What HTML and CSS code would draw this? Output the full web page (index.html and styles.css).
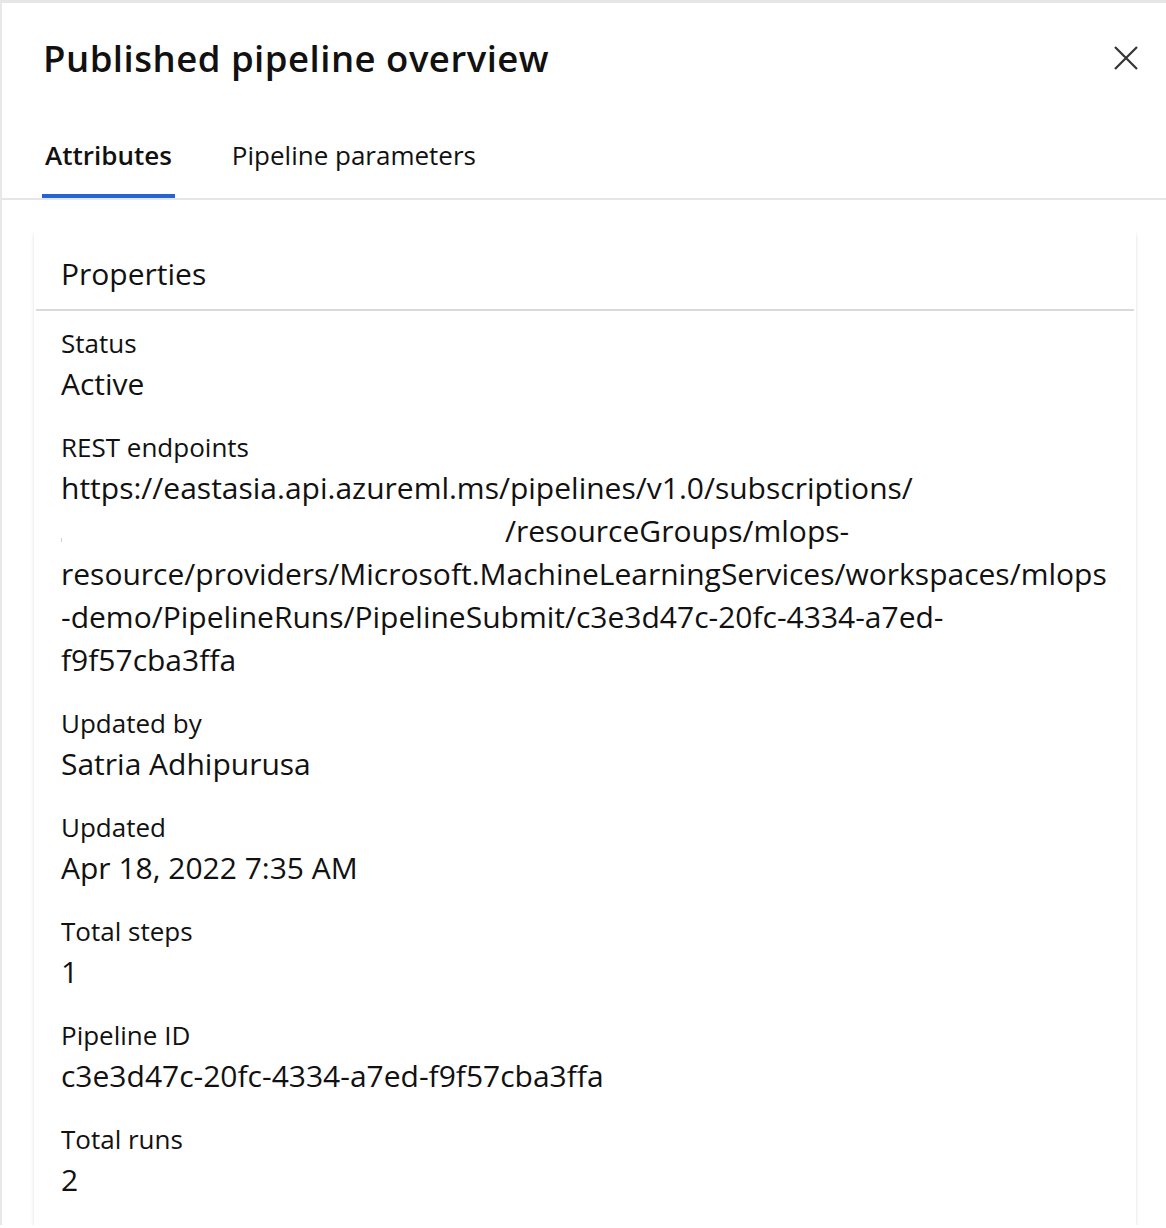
FILE: index.html
```html
<!DOCTYPE html>
<html lang="en">
<head>
<meta charset="utf-8">
<title>Published pipeline overview</title>
<link rel="stylesheet" href="styles.css">
</head>
<body>
<div class="panel">
  <div class="title-row">
    <h1 class="title">Published pipeline overview</h1>
    <button class="close" aria-label="Close">
      <svg viewBox="0 0 24 24" width="24" height="24"><path d="M1 1L23 23M23 1L1 23" stroke="currentColor" stroke-width="2.2" fill="none"/></svg>
    </button>
  </div>
  <nav class="tabs">
    <div class="tab active">Attributes</div>
    <div class="tab">Pipeline parameters</div>
  </nav>
  <div class="content">
    <section class="card">
      <div class="card-head">Properties</div>
      <div class="card-divider"></div>
      <dl class="fields">
        <div class="field"><dt>Status</dt><dd>Active</dd></div>
        <div class="field"><dt>REST endpoints</dt><dd class="url">
          <span class="line">https://eastasia.api.azureml.ms/pipelines/v1.0/subscriptions/</span>
          <span class="line"><span class="redacted"></span>/resourceGroups/mlops-</span>
          <span class="line">resource/providers/Microsoft.MachineLearningServices/workspaces/mlops</span>
          <span class="line">-demo/PipelineRuns/PipelineSubmit/c3e3d47c-20fc-4334-a7ed-</span>
          <span class="line">f9f57cba3ffa</span>
        </dd></div>
        <div class="field"><dt>Updated by</dt><dd>Satria Adhipurusa</dd></div>
        <div class="field"><dt>Updated</dt><dd>Apr 18, 2022 7:35 AM</dd></div>
        <div class="field"><dt>Total steps</dt><dd>1</dd></div>
        <div class="field"><dt>Pipeline ID</dt><dd>c3e3d47c-20fc-4334-a7ed-f9f57cba3ffa</dd></div>
        <div class="field"><dt>Total runs</dt><dd>2</dd></div>
      </dl>
    </section>
  </div>
</div>
</body>
</html>
```
FILE: styles.css
```css
html, body {
  margin: 0;
  background: #ffffff;
}
body {
  font-family: "Open Sans", "Segoe UI", sans-serif;
  color: #111111;
}
.panel {
  border-top: 3px solid #e6e6e6;
  border-left: 2px solid #e8e8e8;
  height: 1225px;
  overflow: hidden;
  box-sizing: border-box;
}
.title-row {
  display: flex;
  align-items: center;
  justify-content: space-between;
  padding: 33px 28px 0 41px;
}
.title {
  margin: 0;
  font-size: 36.5px;
  line-height: 44px;
  font-weight: 600;
  letter-spacing: 0.5px;
}
.close {
  width: 24px;
  height: 24px;
  padding: 0;
  border: 0;
  background: none;
  color: #333333;
  display: flex;
}
.tabs {
  display: flex;
  gap: 54px;
  margin-top: 57px;
  padding-left: 40px;
  border-bottom: 2px solid #e6e6e6;
}
.tab {
  font-size: 26px;
  line-height: 36px;
  padding: 0 3px 21px;
  border-bottom: 4px solid transparent;
}
.tab.active {
  font-weight: 600;
  border-bottom-color: #2364d2;
}
.content {
  padding: 32px 30px 0 32px;
}
.card {
  background: #ffffff;
  box-shadow: 0 1.6px 3.6px rgba(0, 0, 0, 0.13), 0 0.3px 0.9px rgba(0, 0, 0, 0.11);
  min-height: 1100px;
}
.card-head {
  padding: 20px 27px 14px;
  font-size: 30px;
  line-height: 43px;
}
.card-divider {
  margin: 0 2px;
  border-bottom: 2px solid #d9d9d9;
}
.fields {
  margin: 0;
  padding: 13px 27px 40px;
  display: flex;
  flex-direction: column;
  gap: 23px;
}
.field dt {
  font-size: 26px;
  line-height: 38px;
}
.field dd {
  margin: 0;
  font-size: 30px;
  line-height: 43px;
}
.url .line {
  display: block;
  white-space: nowrap;
}
.redacted {
  display: inline-block;
  width: 444px;
  height: 4px;
  border-left: 1px solid #d0d0d0;
  box-sizing: border-box;
}
```
